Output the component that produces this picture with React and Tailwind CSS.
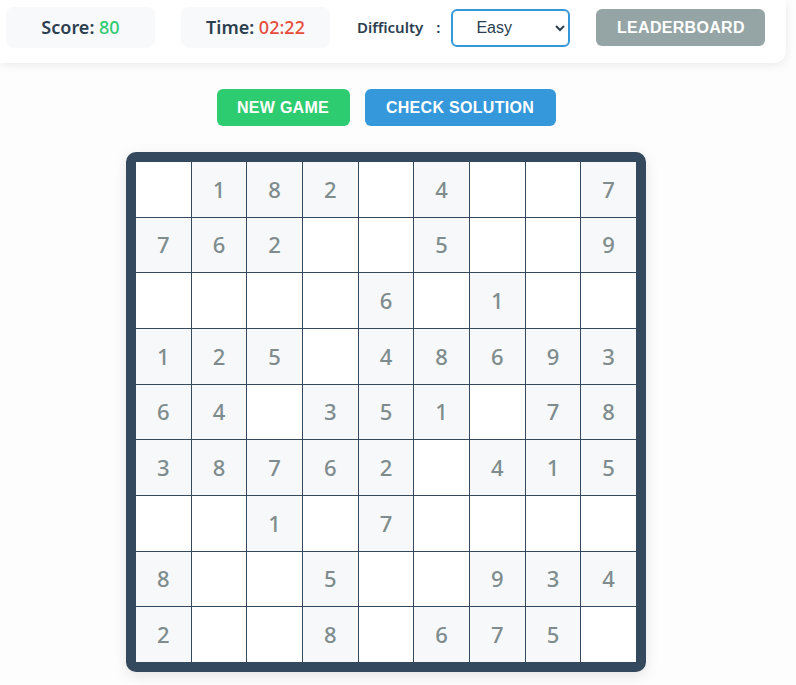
import React, { useState } from 'react';

const puzzle = [
  [0, 1, 8, 2, 0, 4, 0, 0, 7],
  [7, 6, 2, 0, 0, 5, 0, 0, 9],
  [0, 0, 0, 0, 6, 0, 1, 0, 0],
  [1, 2, 5, 0, 4, 8, 6, 9, 3],
  [6, 4, 0, 3, 5, 1, 0, 7, 8],
  [3, 8, 7, 6, 2, 0, 4, 1, 5],
  [0, 0, 1, 0, 7, 0, 0, 0, 0],
  [8, 0, 0, 5, 0, 0, 9, 3, 4],
  [2, 0, 0, 8, 0, 6, 7, 5, 0],
];

const Cell = ({ value }) => (
  <div
    className={`flex items-center justify-center text-[22px] font-medium text-[#7f8c8d] ${
      value ? 'bg-[#f6f8fa]' : 'bg-white'
    }`}
  >
    {value || ''}
  </div>
);

export default function App() {
  const [difficulty, setDifficulty] = useState('easy');

  return (
    <div
      className="min-h-[685px] w-[796px] bg-[#fdfdfd] overflow-hidden"
      style={{ fontFamily: '"Noto Sans", "Open Sans", sans-serif' }}
    >
      {/* header */}
      <div className="w-[786px] bg-white rounded-br-[12px] shadow-[0_2px_10px_rgba(0,0,0,0.08)] pl-[6px] pt-[7px] pb-[15px] flex items-center">
        <div className="w-[149px] h-[41px] rounded-lg bg-[#f8f9fa] flex items-center justify-center text-[18px] font-semibold text-[#2c3e50]">
          Score:&nbsp;<span className="text-[#2ecc71] font-medium">80</span>
        </div>
        <div className="ml-[26px] w-[149px] h-[41px] rounded-lg bg-[#f8f9fa] flex items-center justify-center text-[18px] font-semibold text-[#2c3e50]">
          Time:&nbsp;<span className="text-[#e74c3c] font-medium">02:22</span>
        </div>
        <label className="ml-[27px] text-[15px] font-semibold text-[#2c3e50] flex items-center">
          Difficulty
          <span className="ml-[13px] mr-[11px]">:</span>
        </label>
        <select
          value={difficulty}
          onChange={(e) => setDifficulty(e.target.value)}
          className="w-[119px] h-[38px] border-2 border-[#3498db] rounded-[6px] bg-white pl-[19px] pr-1 text-[16px] text-[#2c3e50] outline-none"
          style={{ fontFamily: '"Liberation Sans", Arial, sans-serif' }}
        >
          <option value="easy">Easy</option>
          <option value="medium">Medium</option>
          <option value="hard">Hard</option>
        </select>
        <button
          className="ml-[26px] w-[169px] h-[37px] rounded-[6px] bg-[#95a5a6] text-white text-[16px] font-bold tracking-[0.3px]"
          style={{ fontFamily: '"Liberation Sans", Arial, sans-serif' }}
        >
          LEADERBOARD
        </button>
      </div>

      {/* main */}
      <div className="w-[772px] flex flex-col items-center">
        <div
          className="mt-[26px] flex gap-[15px]"
          style={{ fontFamily: '"Liberation Sans", Arial, sans-serif' }}
        >
          <button className="w-[133px] h-[37px] rounded-[6px] bg-[#2ecc71] text-white text-[16px] font-bold tracking-[0.3px]">
            NEW GAME
          </button>
          <button className="w-[191px] h-[37px] rounded-[6px] bg-[#3498db] text-white text-[16px] font-bold tracking-[0.3px]">
            CHECK SOLUTION
          </button>
        </div>

        <div className="mt-[26px] w-[520px] h-[520px] border-[10px] border-[#34495e] rounded-[10px] bg-[#34495e] shadow-[0_4px_14px_rgba(0,0,0,0.1)] grid grid-cols-9 grid-rows-9 gap-px">
          {puzzle.flat().map((v, i) => (
            <Cell key={i} value={v} />
          ))}
        </div>
      </div>
    </div>
  );
}
